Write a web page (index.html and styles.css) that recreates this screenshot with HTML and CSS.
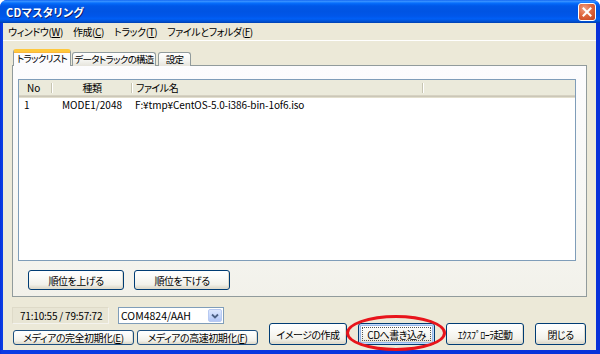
FILE: index.html
```html
<!DOCTYPE html>
<html lang="ja">
<head>
    <meta charset="UTF-8">
    <title>CDマスタリング</title>
    <link rel="stylesheet" href="styles.css">
</head>
<body>
    <div class="window">
        <!-- Title bar -->
        <div class="titlebar">
            <span class="title">CDマスタリング</span>
            <span class="close-btn">
                <svg width="16" height="16" viewBox="0 0 16 16">
                    <path d="M4.5 4.5 L11.5 11.5 M11.5 4.5 L4.5 11.5" stroke="#fff" stroke-width="2" stroke-linecap="square"/>
                </svg>
            </span>
        </div>

        <div class="client">
            <!-- Menu -->
            <div class="menubar">
                <span class="menu-item">ウィンドウ(<u>W</u>)</span>
                <span class="menu-item">作成(<u>C</u>)</span>
                <span class="menu-item">トラック(<u>T</u>)</span>
                <span class="menu-item">ファイルとフォルダ(<u>F</u>)</span>
            </div>

            <!-- Tabs -->
            <div class="tabs">
                <div class="tab tab-active tab-tracks">トラックリスト</div>
                <div class="tab tab-data">データトラックの構造</div>
                <div class="tab tab-settings">設定</div>
            </div>

            <div class="panel">
                <div class="listview">
                    <div class="list-header">
                        <div class="col col-no">No</div>
                        <div class="col col-type">種類</div>
                        <div class="col col-file">ファイル名</div>
                        <div class="col col-rest"></div>
                    </div>
                    <div class="list-row">
                        <div class="col col-no">1</div>
                        <div class="col col-type">MODE1/2048</div>
                        <div class="col col-file">F:¥tmp¥CentOS-5.0-i386-bin-1of6.iso</div>
                    </div>
                </div>
                <div class="panel-buttons">
                    <button class="btn btn-order">順位を上げる</button>
                    <button class="btn btn-order">順位を下げる</button>
                </div>
            </div>

            <!-- Bottom area -->
            <div class="footer">
                <div class="footer-left">
                    <div class="status-row">
                        <div class="time-box">71:10:55 / 79:57:72</div>
                        <div class="combo">
                            <span class="combo-text">COM4824/AAH</span>
                            <span class="combo-arrow">
                                <svg width="8" height="6" viewBox="0 0 8 6">
                                    <path d="M1 1.5 L4 4.5 L7 1.5" fill="none" stroke="#4d6185" stroke-width="1.8"/>
                                </svg>
                            </span>
                        </div>
                    </div>
                    <div class="init-row">
                        <button class="btn btn-init">メディアの完全初期化(<u>E</u>)</button>
                        <button class="btn btn-init">メディアの高速初期化(<u>F</u>)</button>
                    </div>
                </div>
                <div class="footer-right">
                    <button class="btn btn-action btn-image">イメージの作成</button>
                    <button class="btn btn-action btn-write btn-default">
                        <span class="focus-ring">CDへ書き込み</span>
                        <span class="annotation"></span>
                    </button>
                    <button class="btn btn-action btn-explorer">ｴｸｽﾌﾟﾛｰﾗ起動</button>
                    <button class="btn btn-action btn-close">閉じる</button>
                </div>
            </div>
        </div>
    </div>
</body>
</html>
```

FILE: styles.css
```css
/* Basic Styles */
body {
    margin: 0;
    padding: 0;
    width: 600px;
    height: 354px;
    overflow: hidden;
    background: #ffffff;
    font-family: "Noto Sans CJK JP", "Liberation Sans", sans-serif;
    font-size: 10px;
    font-feature-settings: "palt";
    letter-spacing: -0.5px;
    color: #000;
}

/* Window frame */
.window {
    width: 600px;
    height: 354px;
    box-sizing: border-box;
    display: flex;
    flex-direction: column;
    background: linear-gradient(to right, #0831d9, #0a3ce4 2px, #0831d9);
    border-radius: 7px 7px 0 0;
    overflow: hidden;
}

/* Title bar */
.titlebar {
    height: 23px;
    flex-shrink: 0;
    display: flex;
    align-items: center;
    justify-content: space-between;
    padding: 0 4px 0 6px;
    background: linear-gradient(to bottom,
        #0a5ef0 0%, #3d95ff 5%, #1b7fff 10%, #0368f8 16%,
        #0058e8 26%, #0054e3 50%, #0056ea 70%, #005ff6 82%,
        #0052d6 92%, #003fb0 100%);
}

.title {
    color: #fff;
    font-weight: bold;
    font-size: 11px;
    letter-spacing: 0.3px;
    text-shadow: 1px 1px 0 #0a1e6e;
    line-height: 14px;
}

.close-btn {
    width: 16px;
    height: 16px;
    display: flex;
    border: 1px solid #fff;
    border-radius: 3px;
    background: radial-gradient(circle at 35% 30%, #f0a085 0%, #e0683f 45%, #c2401c 100%);
}

/* Client area */
.client {
    flex: 1;
    margin: 0 4px 4px 3px;
    background: #ece9d8;
    display: flex;
    flex-direction: column;
}

/* Menu */
.menubar {
    height: 17px;
    display: flex;
    align-items: center;
    border-bottom: 1px solid #fff;
    padding-left: 5px;
}

.menu-item {
    line-height: 14px;
    margin-right: 10px;
    letter-spacing: -0.4px;
}

/* Tabs */
.tabs {
    position: relative;
    z-index: 1;
    display: flex;
    align-items: flex-end;
    height: 17px;
    margin: 8px 0 -1px 10px;
}

.tab {
    box-sizing: border-box;
    height: 14px;
    line-height: 12px;
    text-align: center;
    white-space: nowrap;
    font-size: 9.5px;
    letter-spacing: -0.7px;
    border: 1px solid #919b9c;
    border-bottom: none;
    border-radius: 3px 3px 0 0;
    background: linear-gradient(#ffffff, #f3f3ef 60%, #e6e4dc);
    margin-right: 1px;
}

.tab-active {
    height: 17px;
    line-height: 13px;
    border-top: 3px solid #ffc83c;
    box-shadow: inset 0 1px 0 #f9b53b;
    background: #fcfcfe;
}

.tab-tracks { width: 58px; }
.tab-data { width: 84px; margin-right: 2px; }
.tab-settings { width: 33px; }

/* Tab panel */
.panel {
    box-sizing: border-box;
    width: 575px;
    height: 232px;
    margin-left: 9px;
    border: 1px solid #919b9c;
    background: linear-gradient(#fcfcfe, #f7f7f4 60%, #f2f1ea);
    padding: 13px 0 0 5px;
}

/* List view */
.listview {
    box-sizing: border-box;
    width: 558px;
    height: 182px;
    border: 1px solid #7f9db9;
    background: #fff;
}

.list-header {
    display: flex;
    height: 15px;
    background: #ebeadb;
    border-bottom: 1px solid #d6d2c2;
    box-shadow: 0 1px 0 #cbc7b8, 0 2px 0 #e2decd;
    margin-bottom: 2px;
}

.list-header .col {
    position: relative;
    line-height: 15px;
}

.list-header .col-no::after,
.list-header .col-type::after,
.list-header .col-file::after {
    content: "";
    position: absolute;
    right: 0;
    top: 3px;
    bottom: 2px;
    width: 1px;
    background: #c7c5b2;
    box-shadow: 1px 0 0 #fff;
}

.list-row {
    display: flex;
    height: 13px;
    line-height: 13px;
    margin-top: 1px;
    letter-spacing: 0;
}

.col {
    box-sizing: border-box;
    white-space: nowrap;
}

.col-no { width: 33px; padding-left: 8px; letter-spacing: 0; }
.col-type { width: 80px; text-align: center; }
.col-file { width: 291px; padding-left: 4px; }
.col-rest { flex: 1; }

.list-row .col-no { padding-left: 5px; }
.list-row .col-file { padding-left: 3px; letter-spacing: -0.1px; }

/* Buttons */
.btn {
    font: inherit;
    font-feature-settings: "palt";
    letter-spacing: -0.5px;
    color: #000;
    box-sizing: border-box;
    padding: 0;
    border: 1px solid #003c74;
    border-radius: 3px;
    background: linear-gradient(#ffffff 0%, #fbfbf9 30%, #f2f1ea 75%, #e3e0d3 90%, #d6d0c5 100%);
    box-shadow: inset -1px -1px 0 #e0dccd;
    white-space: nowrap;
}

.panel-buttons {
    display: flex;
    gap: 10px;
    margin: 9px 0 0 10px;
}

.btn-order {
    width: 96px;
    height: 20px;
}

/* Footer */
.footer {
    display: flex;
    align-items: flex-end;
    margin: 10px 0 0 9px;
}

.footer-left {
    display: flex;
    flex-direction: column;
    width: 246px;
}

.status-row {
    display: flex;
    gap: 9px;
}

.time-box {
    box-sizing: border-box;
    width: 97px;
    height: 17px;
    line-height: 15px;
    padding-left: 7px;
    background: #e8e5d4;
    border: 1px solid #f4f3ee;
    border-top-color: #dedac8;
    border-left-color: #dedac8;
    letter-spacing: -0.2px;
}

.combo {
    box-sizing: border-box;
    width: 106px;
    height: 17px;
    border: 1px solid #7f9db9;
    background: #fff;
    display: flex;
    align-items: center;
    justify-content: space-between;
    padding: 0 1px 0 2px;
}

.combo-text {
    line-height: 13px;
    font-size: 10.5px;
    letter-spacing: 0;
}

.combo-arrow {
    box-sizing: border-box;
    width: 14px;
    height: 13px;
    display: flex;
    align-items: center;
    justify-content: center;
    border: 1px solid #b7c9f1;
    border-radius: 2px;
    background: linear-gradient(#dde7fd, #c4d5fb 60%, #b2c6f6);
}

.init-row {
    display: flex;
    gap: 3px;
    margin: 6px 0 0 1px;
}

.btn-init {
    width: 121px;
    height: 15px;
    line-height: 12px;
    border-color: #1c4f80;
}

.footer-right {
    display: flex;
    gap: 11px;
    margin-left: 11px;
}

.btn-action {
    height: 22px;
}

.btn-image { width: 78px; }
.btn-write { width: 77px; }
.btn-explorer { width: 78px; letter-spacing: -0.6px; }
.btn-close { width: 51px; }

/* Default (focused) button */
.btn-default {
    position: relative;
    box-shadow: inset 0 0 0 1px #c3d8f8, inset 0 0 0 2px #98b8ea;
    display: flex;
    padding: 3px;
}

.focus-ring {
    flex: 1;
    display: flex;
    align-items: center;
    justify-content: center;
    border: 1px dotted #555;
}

/* Red marker drawn over the screenshot */
.annotation {
    position: absolute;
    left: -13px;
    top: -9px;
    width: 100px;
    height: 36px;
    box-sizing: border-box;
    border: 3px solid #e8141b;
    border-radius: 50%;
}
```
